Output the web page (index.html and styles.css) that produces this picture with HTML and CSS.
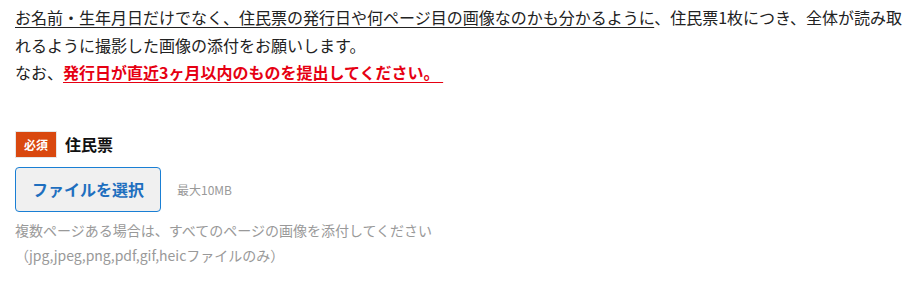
FILE: index.html
```html
<!DOCTYPE html>
<html lang="ja">
<head>
<meta charset="utf-8">
<link rel="stylesheet" href="styles.css">
</head>
<body>
<div class="page">
  <p class="intro"><span class="ul">お名前・生年月日だけでなく、住民票の発行日や何ページ目の画像なのかも分かるように</span>、住民票1枚につき、全体が読み取れるように撮影した画像の添付をお願いします。<br>なお、<span class="warn">発行日が直近3ヶ月以内のものを提出してください。 </span></p>

  <div class="field">
    <div class="label-row">
      <span class="req">必須</span>
      <span class="label">住民票</span>
    </div>
    <div class="upload-row">
      <button class="file-btn" type="button">ファイルを選択</button>
      <span class="max">最大10MB</span>
    </div>
    <p class="note">複数ページある場合は、すべてのページの画像を添付してください<br>（jpg,jpeg,png,pdf,gif,heicファイルのみ）</p>
  </div>
</div>
</body>
</html>
```
FILE: styles.css
```css
html, body {
  margin: 0;
  padding: 0;
  background: #fff;
}
body {
  font-family: "Noto Sans CJK JP", "Noto Sans", sans-serif;
  color: #222;
}
.page {
  width: 893px;
  padding: 4px 0 0 15px;
}
.intro {
  margin: 0;
  font-size: 16px;
  line-height: 27.5px;
}
.ul {
  text-decoration: underline;
  text-underline-offset: 3px;
}
.warn {
  color: #e60012;
  font-weight: bold;
  text-decoration: underline;
  text-underline-offset: 3px;
  white-space: pre;
}
.field {
  margin-top: 44px;
}
.label-row {
  display: flex;
  align-items: center;
  gap: 8px;
}
.req {
  display: inline-flex;
  align-items: center;
  justify-content: center;
  width: 40px;
  height: 25px;
  background: #d9480f;
  border: 1px solid #e6e6e6;
  color: #fff;
  font-size: 12px;
  font-weight: bold;
}
.label {
  font-size: 16px;
  font-weight: bold;
  color: #111;
}
.upload-row {
  display: flex;
  align-items: center;
  margin-top: 9px;
  gap: 16px;
}
.file-btn {
  width: 146px;
  height: 45px;
  border: 1px solid #1a7fd4;
  border-radius: 4px;
  background: #f0f0f0;
  color: #1e6fbf;
  font-family: "Noto Sans CJK JP", sans-serif;
  font-size: 16px;
  font-weight: bold;
  padding: 0;
}
.max {
  font-size: 12px;
  color: #999;
}
.note {
  margin: 6px 0 0;
  font-size: 14px;
  line-height: 25px;
  color: #999;
}
```
